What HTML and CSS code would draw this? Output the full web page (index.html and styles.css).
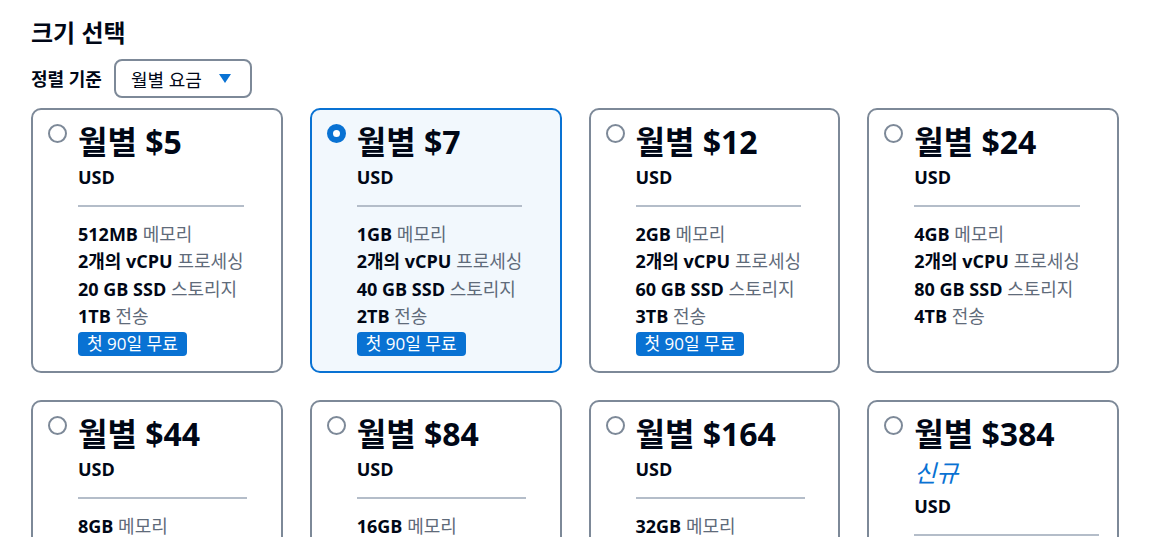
FILE: index.html
```html
<!DOCTYPE html>
<html lang="ko">
<head>
<meta charset="utf-8">
<title>크기 선택</title>
<link rel="stylesheet" href="styles.css">
</head>
<body>
<main class="page">
  <h2 class="heading">크기 선택</h2>
  <div class="sort-row">
    <span class="sort-label">정렬 기준</span>
    <button class="select" type="button">
      <span>월별 요금</span>
      <svg class="caret" width="12" height="9" viewBox="0 0 12 9"><path d="M0 0 H12 L6 9 Z" fill="#0972d3"/></svg>
    </button>
  </div>
  <div class="grid">
    <div class="card">
      <span class="radio"></span>
      <div class="content">
        <div class="price">월별 $5</div>
        <div class="currency">USD</div>
        <div class="divider"></div>
        <ul class="specs">
          <li><b>512MB</b> 메모리</li>
          <li><b>2개의 vCPU</b> 프로세싱</li>
          <li><b>20 GB SSD</b> 스토리지</li>
          <li><b>1TB</b> 전송</li>
        </ul>
        <span class="badge">첫 90일 무료</span>
      </div>
    </div>
    <div class="card selected">
      <span class="radio"></span>
      <div class="content">
        <div class="price">월별 $7</div>
        <div class="currency">USD</div>
        <div class="divider"></div>
        <ul class="specs">
          <li><b>1GB</b> 메모리</li>
          <li><b>2개의 vCPU</b> 프로세싱</li>
          <li><b>40 GB SSD</b> 스토리지</li>
          <li><b>2TB</b> 전송</li>
        </ul>
        <span class="badge">첫 90일 무료</span>
      </div>
    </div>
    <div class="card">
      <span class="radio"></span>
      <div class="content">
        <div class="price">월별 $12</div>
        <div class="currency">USD</div>
        <div class="divider"></div>
        <ul class="specs">
          <li><b>2GB</b> 메모리</li>
          <li><b>2개의 vCPU</b> 프로세싱</li>
          <li><b>60 GB SSD</b> 스토리지</li>
          <li><b>3TB</b> 전송</li>
        </ul>
        <span class="badge">첫 90일 무료</span>
      </div>
    </div>
    <div class="card">
      <span class="radio"></span>
      <div class="content">
        <div class="price">월별 $24</div>
        <div class="currency">USD</div>
        <div class="divider"></div>
        <ul class="specs">
          <li><b>4GB</b> 메모리</li>
          <li><b>2개의 vCPU</b> 프로세싱</li>
          <li><b>80 GB SSD</b> 스토리지</li>
          <li><b>4TB</b> 전송</li>
        </ul>
      </div>
    </div>
    <div class="card">
      <span class="radio"></span>
      <div class="content">
        <div class="price">월별 $44</div>
        <div class="currency">USD</div>
        <div class="divider"></div>
        <ul class="specs">
          <li><b>8GB</b> 메모리</li>
          <li><b>2개의 vCPU</b> 프로세싱</li>
          <li><b>160 GB SSD</b> 스토리지</li>
          <li><b>5TB</b> 전송</li>
        </ul>
      </div>
    </div>
    <div class="card">
      <span class="radio"></span>
      <div class="content">
        <div class="price">월별 $84</div>
        <div class="currency">USD</div>
        <div class="divider"></div>
        <ul class="specs">
          <li><b>16GB</b> 메모리</li>
          <li><b>4개의 vCPU</b> 프로세싱</li>
          <li><b>320 GB SSD</b> 스토리지</li>
          <li><b>6TB</b> 전송</li>
        </ul>
      </div>
    </div>
    <div class="card">
      <span class="radio"></span>
      <div class="content">
        <div class="price">월별 $164</div>
        <div class="currency">USD</div>
        <div class="divider"></div>
        <ul class="specs">
          <li><b>32GB</b> 메모리</li>
          <li><b>8개의 vCPU</b> 프로세싱</li>
          <li><b>640 GB SSD</b> 스토리지</li>
          <li><b>7TB</b> 전송</li>
        </ul>
      </div>
    </div>
    <div class="card">
      <span class="radio"></span>
      <div class="content">
        <div class="price">월별 $384</div>
        <div class="new">신규</div>
        <div class="currency">USD</div>
        <div class="divider"></div>
        <ul class="specs">
          <li><b>64GB</b> 메모리</li>
          <li><b>16개의 vCPU</b> 프로세싱</li>
          <li><b>1,280 GB SSD</b> 스토리지</li>
          <li><b>8TB</b> 전송</li>
        </ul>
      </div>
    </div>
  </div>
</main>
</body>
</html>
```
FILE: styles.css
```css
* { box-sizing: border-box; }
html, body {
  margin: 0;
  background: #ffffff;
}
body {
  font-family: "Open Sans", "Noto Sans CJK KR", sans-serif;
  color: #000716;
}
.page {
  padding: 18px 31px 40px;
}
.heading {
  margin: 0;
  font-size: 24px;
  line-height: 30px;
  font-weight: 700;
}
.sort-row {
  display: flex;
  align-items: center;
  gap: 12px;
  margin-top: 11px;
}
.sort-label {
  font-size: 18px;
  line-height: 24px;
  font-weight: 700;
}
.select {
  display: flex;
  align-items: center;
  justify-content: space-between;
  width: 138px;
  height: 39px;
  padding: 0 19px 0 15px;
  border: 2px solid #7d8998;
  border-radius: 8px;
  background: #ffffff;
  font-family: inherit;
  font-size: 18px;
  color: #000716;
}
.caret { display: block; }
.grid {
  display: grid;
  grid-template-columns: repeat(4, 1fr);
  gap: 27px;
  margin-top: 10px;
}
.card {
  display: flex;
  align-items: flex-start;
  gap: 11px;
  padding: 13px 15px 15px 15px;
  border: 2px solid #7d8998;
  border-radius: 10px;
  background: #ffffff;
}
.card.selected {
  border-color: #0972d3;
  background: #f2f8fd;
}
.radio {
  flex: none;
  width: 19px;
  height: 19px;
  margin-top: 1px;
  border: 2px solid #7d8998;
  border-radius: 50%;
  background: #ffffff;
}
.selected .radio {
  border: 6px solid #0972d3;
}
.content {
  display: flex;
  flex-direction: column;
  align-items: flex-start;
  width: max-content;
}
.price {
  font-size: 32px;
  line-height: 38px;
  font-weight: 700;
}
.new {
  font-size: 24px;
  line-height: 30px;
  font-style: italic;
  color: #0972d3;
  margin-top: 5px;
  margin-bottom: 2px;
}
.currency {
  font-size: 18px;
  line-height: 24px;
  font-weight: 700;
  margin-top: 4px;
}
.divider {
  align-self: stretch;
  height: 2px;
  background: #b4bdc9;
  margin-top: 16px;
}
.specs {
  list-style: none;
  margin: 14px 0 0;
  padding: 0;
  font-size: 18px;
  line-height: 27.3px;
  color: #5f6b7a;
}
.specs b {
  color: #000716;
  font-weight: 700;
}
.badge {
  margin-top: 2px;
  padding: 0 9px;
  height: 24px;
  line-height: 24px;
  border-radius: 4px;
  background: #0972d3;
  color: #ffffff;
  font-size: 17px;
}
```
